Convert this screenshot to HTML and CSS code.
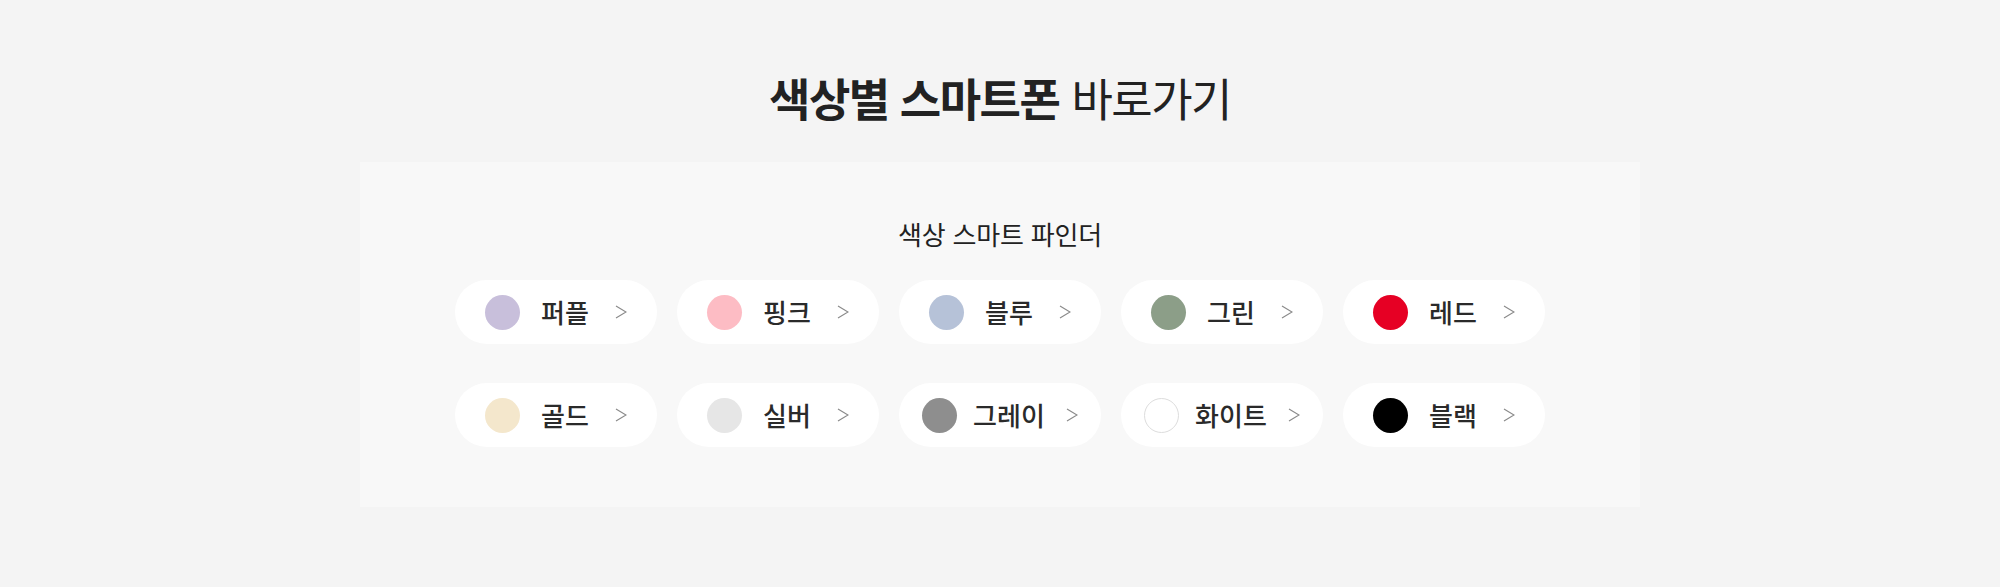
FILE: index.html
```html
<!DOCTYPE html>
<html lang="ko">

<head>
    <meta charset="UTF-8">
    <meta name="viewport" content="width=device-width, initial-scale=1.0">
    <title>색상별 스마트폰 바로가기</title>
    <link rel="stylesheet" href="styles.css">
</head>

<body>
    <h2 class="title"><strong>색상별 스마트폰</strong><span>바로가기</span></h2>

    <div class="finder">
        <h3 class="finder-title">색상 스마트 파인더</h3>

        <ul class="colors">
            <li><a class="chip" href="#"><span class="dot purple"></span><span class="label">퍼플</span><svg class="arrow" viewBox="0 0 12 14"><polyline points="1,1 11,7 1,13" /></svg></a></li>
            <li><a class="chip" href="#"><span class="dot pink"></span><span class="label">핑크</span><svg class="arrow" viewBox="0 0 12 14"><polyline points="1,1 11,7 1,13" /></svg></a></li>
            <li><a class="chip" href="#"><span class="dot blue"></span><span class="label">블루</span><svg class="arrow" viewBox="0 0 12 14"><polyline points="1,1 11,7 1,13" /></svg></a></li>
            <li><a class="chip" href="#"><span class="dot green"></span><span class="label">그린</span><svg class="arrow" viewBox="0 0 12 14"><polyline points="1,1 11,7 1,13" /></svg></a></li>
            <li><a class="chip" href="#"><span class="dot red"></span><span class="label">레드</span><svg class="arrow" viewBox="0 0 12 14"><polyline points="1,1 11,7 1,13" /></svg></a></li>
            <li><a class="chip" href="#"><span class="dot gold"></span><span class="label">골드</span><svg class="arrow" viewBox="0 0 12 14"><polyline points="1,1 11,7 1,13" /></svg></a></li>
            <li><a class="chip" href="#"><span class="dot silver"></span><span class="label">실버</span><svg class="arrow" viewBox="0 0 12 14"><polyline points="1,1 11,7 1,13" /></svg></a></li>
            <li><a class="chip" href="#"><span class="dot gray"></span><span class="label">그레이</span><svg class="arrow" viewBox="0 0 12 14"><polyline points="1,1 11,7 1,13" /></svg></a></li>
            <li><a class="chip" href="#"><span class="dot white"></span><span class="label">화이트</span><svg class="arrow" viewBox="0 0 12 14"><polyline points="1,1 11,7 1,13" /></svg></a></li>
            <li><a class="chip" href="#"><span class="dot black"></span><span class="label">블랙</span><svg class="arrow" viewBox="0 0 12 14"><polyline points="1,1 11,7 1,13" /></svg></a></li>
        </ul>
    </div>
</body>

</html>
```

FILE: styles.css
```css
body {
    margin: 0;
    background-color: #f4f4f4;
    font-family: "Noto Sans CJK KR", "Noto Sans", sans-serif;
    color: #222222;
}

.title {
    margin: 72px 0 38px;
    height: 52px;
    line-height: 52px;
    font-size: 45px;
    letter-spacing: -1.5px;
    text-align: center;
    font-weight: 400;
}

.title strong {
    font-weight: 700;
    margin-right: 12px;
}

.finder {
    width: 1280px;
    margin: 0 auto;
    padding: 57px 0 60px;
    background-color: #f8f8f8;
}

.finder-title {
    margin: 0 0 31px;
    height: 30px;
    line-height: 30px;
    font-size: 26px;
    letter-spacing: -0.2px;
    font-weight: 400;
    text-align: center;
    color: #222222;
}

.colors {
    list-style: none;
    margin: 0;
    padding: 0;
    display: grid;
    grid-template-columns: repeat(5, 202px);
    column-gap: 20px;
    row-gap: 39px;
    justify-content: center;
}

.chip {
    display: flex;
    justify-content: center;
    align-items: center;
    height: 64px;
    border-radius: 32px;
    background-color: #ffffff;
    text-decoration: none;
    color: #2a2a2a;
}

.dot {
    width: 35px;
    height: 35px;
    border-radius: 50%;
    box-sizing: border-box;
    flex-shrink: 0;
}

.label {
    min-width: 58px;
    margin: 0 21px 0 16px;
    font-size: 26px;
    font-weight: 500;
    line-height: 30px;
    text-align: center;
    white-space: nowrap;
}

.arrow {
    width: 12px;
    height: 14px;
    flex-shrink: 0;
}

.arrow polyline {
    fill: none;
    stroke: #8a8a8a;
    stroke-width: 1.2;
}

.purple { background-color: #c8bfdb; }
.pink { background-color: #fdbcc4; }
.blue { background-color: #b6c2d8; }
.green { background-color: #8c9e88; }
.red { background-color: #e60024; }
.gold { background-color: #f4e7cc; }
.silver { background-color: #e6e6e6; }
.gray { background-color: #8e8e8e; }
.white { background-color: #ffffff; border: 1px solid #dddddd; }
.black { background-color: #000000; }
```
